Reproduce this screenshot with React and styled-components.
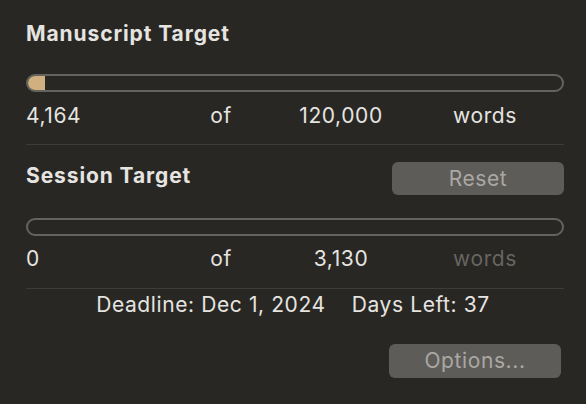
import React from "react";
import styled, { createGlobalStyle } from "styled-components";

const Global = createGlobalStyle`
  html, body { margin: 0; padding: 0; background: #282723; }
  body { font-family: Inter, "Noto Sans", sans-serif; -webkit-font-smoothing: antialiased; }
`;

const Panel = styled.div`
  width: 586px;
  height: 404px;
  box-sizing: border-box;
  padding: 22px 22px 0 26px;
  background: #282723;
  color: #e6e4e0;
  display: flex;
  flex-direction: column;
  font-size: 21px;
  letter-spacing: 0.6px;
`;

const Title = styled.div`
  font-size: 21px;
  font-weight: 700;
  line-height: 24px;
  letter-spacing: 0.9px;
  margin-top: ${(p) => p.$mt || 0}px;
`;

const Bar = styled.div`
  position: relative;
  height: 18px;
  box-sizing: border-box;
  border: 2px solid #65635f;
  border-radius: 9px;
  margin-top: ${(p) => p.$mt}px;
  overflow: hidden;
`;

const Fill = styled.div`
  position: absolute;
  left: -2px;
  top: -2px;
  bottom: -2px;
  background: #cfb07e;
  border-radius: 9px 0 0 9px;
`;

const Numbers = styled.div`
  display: grid;
  grid-template-columns: 134px 122px 118px 1fr;
  line-height: 24px;
  margin-top: ${(p) => p.$mt}px;
`;

const Cell = styled.div`
  text-align: ${(p) => p.$align || "center"};
  padding-right: ${(p) => p.$pr || 0}px;
  color: ${(p) => (p.$dim ? "#676561" : "#e6e4e0")};
`;

const Sep = styled.div`
  height: 1px;
  background: #3e3c39;
  margin-top: ${(p) => p.$mt}px;
`;

const HeaderRow = styled.div`
  display: flex;
  justify-content: space-between;
  align-items: flex-start;
  margin-top: ${(p) => p.$mt}px;
`;

const Button = styled.button`
  width: 172px;
  height: ${(p) => p.$h || 33}px;
  border: none;
  border-radius: 6px;
  background: #5e5c58;
  color: #aaa8a4;
  font-family: inherit;
  font-size: 21px;
  letter-spacing: 0.6px;
  line-height: 24px;
  padding: 0;
  margin-right: ${(p) => p.$mr || 0}px;
`;

const Deadline = styled.div`
  display: flex;
  justify-content: center;
  gap: 26px;
  line-height: 24px;
  margin-top: 4px;
  padding-right: 4px;
`;

const Footer = styled.div`
  display: flex;
  justify-content: flex-end;
  margin-top: 27px;
`;

const NumberRow = ({ value, target, dimWords, mt }) => (
  <Numbers $mt={mt}>
    <Cell $align="left">{value}</Cell>
    <Cell>of</Cell>
    <Cell>{target}</Cell>
    <Cell $align="right" $pr={47} $dim={dimWords}>words</Cell>
  </Numbers>
);

export default function App() {
  const progress = 4164 / 120000;
  return (
    <>
      <Global />
      <Panel>
        <Title>Manuscript Target</Title>
        <Bar $mt={28}>
          <Fill style={{ width: `${Math.max(progress * 100, 3.4)}%` }} />
        </Bar>
        <NumberRow value="4,164" target="120,000" mt={12} />
        <Sep $mt={16} />
        <HeaderRow $mt={17}>
          <Title $mt={2}>Session Target</Title>
          <Button>Reset</Button>
        </HeaderRow>
        <Bar $mt={23} />
        <NumberRow value="0" target="3,130" dimWords mt={11} />
        <Sep $mt={17} />
        <Deadline>
          <span>Deadline: Dec 1, 2024</span>
          <span>Days Left: 37</span>
        </Deadline>
        <Footer>
          <Button $h={34} $mr={3}>Options...</Button>
        </Footer>
      </Panel>
    </>
  );
}
